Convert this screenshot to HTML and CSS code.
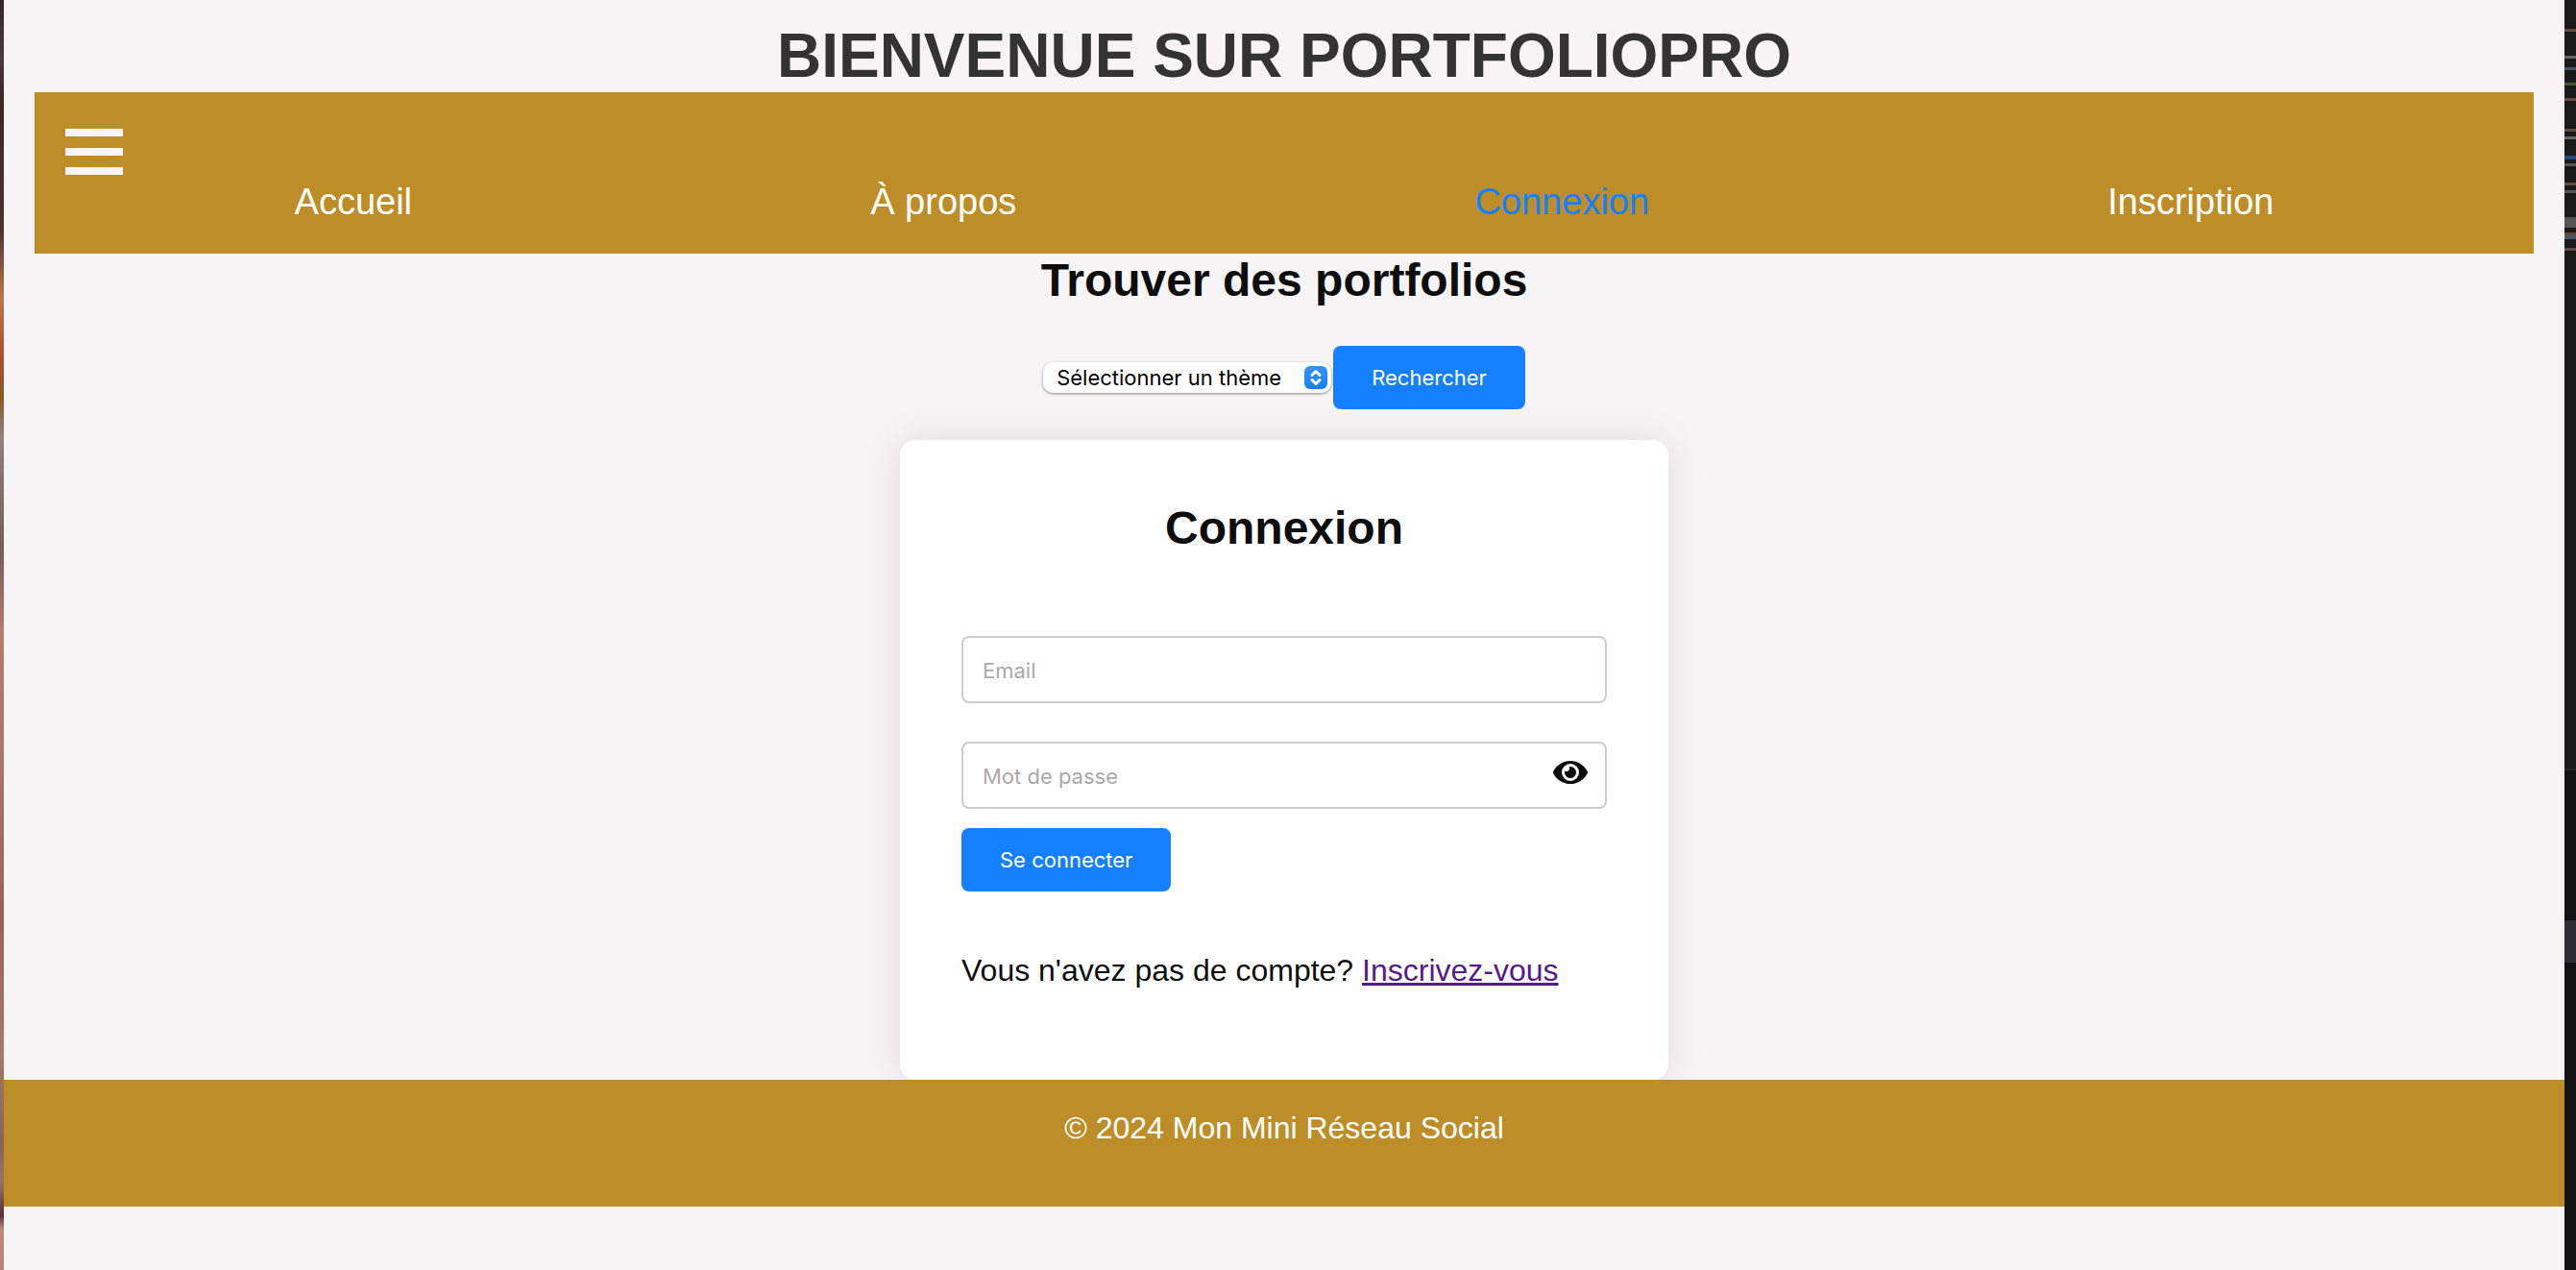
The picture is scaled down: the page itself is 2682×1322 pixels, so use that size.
FILE: index.html
```html
<!DOCTYPE html>
<html lang="fr">
<head>
<meta charset="utf-8">
<meta name="viewport" content="width=device-width, initial-scale=1">
<title>PortfolioPro</title>
<link rel="stylesheet" href="styles.css">
</head>
<body>
<div class="edge edge-left"></div>
<div class="page">
  <header class="header">
    <h1 class="title">Bienvenue sur PortfolioPro</h1>
    <nav class="nav">
      <button class="burger" type="button" aria-label="Menu">
        <span class="bar"></span><span class="bar"></span><span class="bar"></span>
      </button>
      <ul class="links">
        <li><a class="link" href="#accueil">Accueil</a></li>
        <li><a class="link" href="#apropos">À propos</a></li>
        <li><a class="link active" href="#connexion">Connexion</a></li>
        <li><a class="link" href="#inscription">Inscription</a></li>
      </ul>
    </nav>
  </header>
  <main class="main">
    <h2 class="heading">Trouver des portfolios</h2>
    <form class="search">
      <div class="picker">
        <select class="select" aria-label="Thème">
          <option>Sélectionner un thème</option>
        </select>
        <svg class="chevrons" viewBox="0 0 24 24" aria-hidden="true"><path d="M8 9.500 12 5.500 16 9.500M8 14.500 12 18.500 16 14.500"/></svg>
      </div>
      <button class="button" type="button">Rechercher</button>
    </form>
    <section class="card">
      <h2 class="heading">Connexion</h2>
      <form class="login">
        <input class="field" type="email" placeholder="Email" aria-label="Email">
        <div class="password">
          <input class="field" type="password" placeholder="Mot de passe" aria-label="Mot de passe">
          <button class="eye" type="button" aria-label="Afficher le mot de passe">
            <svg viewBox="0 0 576 512" aria-hidden="true"><path d="M572.52 241.400C518.290 135.590 410.930 64 288 64S57.680 135.640 3.480 241.410a32.350 32.350 0 0 0 0 29.190C57.710 376.410 165.070 448 288 448s230.320-71.640 284.520-177.410a32.350 32.350 0 0 0 0-29.190zM288 400a144 144 0 1 1 144-144 143.930 143.930 0 0 1-144 144zm0-240a95.310 95.310 0 0 0-25.310 3.790 47.850 47.850 0 0 1-66.900 66.900A95.780 95.780 0 1 0 288 160z"/></svg>
          </button>
        </div>
        <button class="button" type="button">Se connecter</button>
      </form>
      <p class="signup">Vous n'avez pas de compte? <a class="signup-link" href="#inscription">Inscrivez-vous</a></p>
    </section>
  </main>
  <footer class="footer"><p class="copyright">© 2024 Mon Mini Réseau Social</p></footer>
</div>
<div class="edge edge-right"></div>
</body>
</html>
```

FILE: styles.css
```css
*, *::before, *::after { box-sizing: border-box; }

body {
  margin: 0;
  min-height: 100vh;
  display: flex;
  background: #f6f4f5;
  color: #0d0d0d;
  font-family: "Liberation Sans", Arial, sans-serif;
  font-size: 32px;
  line-height: 36px;
}

h1, h2, p, ul { margin: 0; padding: 0; }

/* Slivers of the desktop on both sides of the page */
.edge { flex: none; }
.edge-left {
  width: 4px;
  background: linear-gradient(#35262c 0, #4a3a42 60px, #40242a 100px, #532f33 240px, #b87a45 310px, #a8502f 371px, #8a5a20 413px, #8f8080 455px, #7a5a5c 573px, #b87c6c 658px, #a87868 784px, #9b6058 953px, #a47a6a 1096px, #8a6058 1190px, #a07068 1230px, #5a3038 1265px, #c08a78 1280px, #b88474 1322px);
}
.edge-right {
  width: 12px;
  background: linear-gradient(
    #1a1a1a 0 30px, #65483d 30px 33px,
    #1a1a1a 33px 58px, #666 58px 61px,
    #1a1a1a 61px 70px, #3c5268 70px 73px,
    #1a1a1a 73px 86px, #3a5a30 86px 89px,
    #1a1a1a 89px 102px, #65483d 102px 105px,
    #1a1a1a 105px 134px, #65483d 134px 137px,
    #1a1a1a 137px 142px, #666 142px 145px,
    #1a1a1a 145px 162px, #224a70 162px 166px,
    #1a1a1a 166px 170px, #555 170px 173px,
    #1a1a1a 173px 190px, #65483d 190px 193px,
    #1a1a1a 193px 198px, #555 198px 201px,
    #1a1a1a 201px 226px, #555 226px 237px,
    #1a1a1a 237px 242px, #65483d 242px 245px,
    #46586a 245px 249px,
    #1a1a1a 249px 258px, #65483d 258px 261px,
    #1a1a1a 261px 800px, #262626 800px 802px,
    #131313 802px 958px, #2e2d33 958px 1002px, #131313 1002px);
}

.page { flex: 1; min-width: 0; }

.header { padding: 20px 32px 0; }
.title {
  color: #333;
  font-size: 64px;
  line-height: 76px;
  text-align: center;
  text-transform: uppercase;
}

.nav { padding: 32px; background: #bd8e28; }
.burger {
  display: flex;
  flex-direction: column;
  gap: 12px;
  padding: 6px 0;
  border: 0;
  background: none;
  cursor: pointer;
}
.bar { width: 60px; height: 8px; background: #f9f4f5; }
.links {
  display: flex;
  justify-content: space-around;
  list-style: none;
  font-size: 38px;
  line-height: 44px;
}
.link { color: #fff; text-decoration: none; }
.link.active { color: #167ffc; }

.main { display: flex; flex-direction: column; align-items: center; }
.heading { font-size: 48px; line-height: 56px; text-align: center; }

.search { display: flex; align-items: center; gap: 2px; padding: 40px 0 32px; }
.picker { position: relative; display: flex; }
.select {
  appearance: none;
  width: 300px;
  height: 32px;
  padding: 0 40px 0 14px;
  border: 0;
  border-radius: 10px;
  background: #fff;
  box-shadow: 0 1px 3px rgba(0, 0, 0, .45);
  color: #000;
  font: 22px/32px Inter, sans-serif;
}
.chevrons {
  position: absolute;
  top: 4px;
  right: 4px;
  width: 24px;
  height: 24px;
  border-radius: 6px;
  background: linear-gradient(#3593fc, #167ffc);
  fill: none;
  stroke: #fff;
  stroke-width: 3;
  stroke-linecap: round;
  stroke-linejoin: round;
  pointer-events: none;
}

.button {
  align-self: flex-start;
  padding: 20px 40px;
  border: 0;
  border-radius: 8px;
  background: #167ffc;
  color: #fff;
  font: 22px/26px Inter, sans-serif;
  cursor: pointer;
}

.card {
  width: 800px;
  max-width: 100%;
  padding: 64px 64px 96px;
  border-radius: 16px;
  background: #fff;
  box-shadow: 0 0 40px rgba(0, 0, 0, .1);
}
.login { display: flex; flex-direction: column; padding: 84px 0 64px; }
.field {
  width: 100%;
  height: 70px;
  padding: 2px 20px 0;
  border: 2px solid #ccc;
  border-radius: 8px;
  background: #fff;
  color: #0d0d0d;
  font: 22px/26px Inter, sans-serif;
}
.field::placeholder { color: #a9a9a9; opacity: 1; }
.password { position: relative; margin: 40px 0 20px; }
.eye {
  position: absolute;
  top: 16px;
  right: 20px;
  display: flex;
  padding: 0;
  border: 0;
  background: none;
  cursor: pointer;
}
.eye svg { width: 36px; height: 32px; fill: #0d0d0d; }
.signup-link { color: #551a8b; }

.footer {
  position: relative;
  padding: 32px 32px 64px;
  background: #bd8e28;
  color: #fff;
  text-align: center;
}
```
